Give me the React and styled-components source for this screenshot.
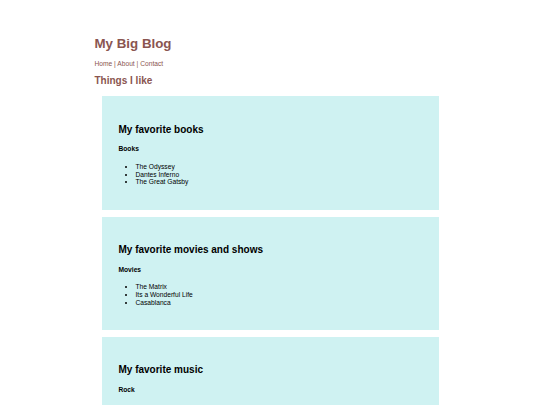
import React from "react";
import styled, { createGlobalStyle } from "styled-components";

const Global = createGlobalStyle`
  html, body { margin: 0; padding: 0; background: #ffffff; }
  body { font-family: "Liberation Sans", Arial, sans-serif; font-size: 6.667px; line-height: 7.66px; color: #000; }
`;

const Page = styled.div`
  width: 351px;
  margin: 0 auto;
  padding-top: 36px;
`;

const SiteTitle = styled.h1`
  margin: 0;
  font-size: 13.33px;
  line-height: 15.33px;
  font-weight: bold;
  color: #8a5550;
`;

const Nav = styled.nav`
  margin-top: 8.3px;
  font-size: 6.667px;
  line-height: 7.66px;
  color: #8a5550;
`;

const NavLink = styled.a`
  color: inherit;
  text-decoration: none;
`;

const SectionTitle = styled.h2`
  margin: 8.2px 0 9.3px;
  font-size: 10px;
  line-height: 11.5px;
  font-weight: bold;
  color: #8a5550;
`;

const Card = styled.section`
  margin: 0 7px 6.7px;
  padding: 27.5px 17px 24px;
  background: #cff2f2;
`;

const CardTitle = styled.h2`
  margin: 0 0 10px;
  font-size: 10px;
  line-height: 11.5px;
  font-weight: bold;
`;

const Category = styled.h4`
  margin: 0 0 10px;
  font-size: 6.667px;
  line-height: 7.66px;
  font-weight: bold;
`;

const List = styled.ul`
  margin: 0;
  padding-left: 17px;
  font-size: 6.667px;
  line-height: 7.66px;
  list-style: disc;
`;

const cards = [
  { title: "My favorite books", category: "Books", items: ["The Odyssey", "Dantes Inferno", "The Great Gatsby"] },
  { title: "My favorite movies and shows", category: "Movies", items: ["The Matrix", "Its a Wonderful Life", "Casablanca"] },
  { title: "My favorite music", category: "Rock", items: ["Red Hot Chili Peppers", "Led Zeppelin", "Pink Floyd"] },
];

export default function App() {
  return (
    <>
      <Global />
      <Page>
        <SiteTitle>My Big Blog</SiteTitle>
        <Nav>
          <NavLink href="#">Home</NavLink> | <NavLink href="#">About</NavLink> | <NavLink href="#">Contact</NavLink>
        </Nav>
        <SectionTitle>Things I like</SectionTitle>
        {cards.map((c) => (
          <Card key={c.title}>
            <CardTitle>{c.title}</CardTitle>
            <Category>{c.category}</Category>
            <List>
              {c.items.map((i) => (
                <li key={i}>{i}</li>
              ))}
            </List>
          </Card>
        ))}
      </Page>
    </>
  );
}
